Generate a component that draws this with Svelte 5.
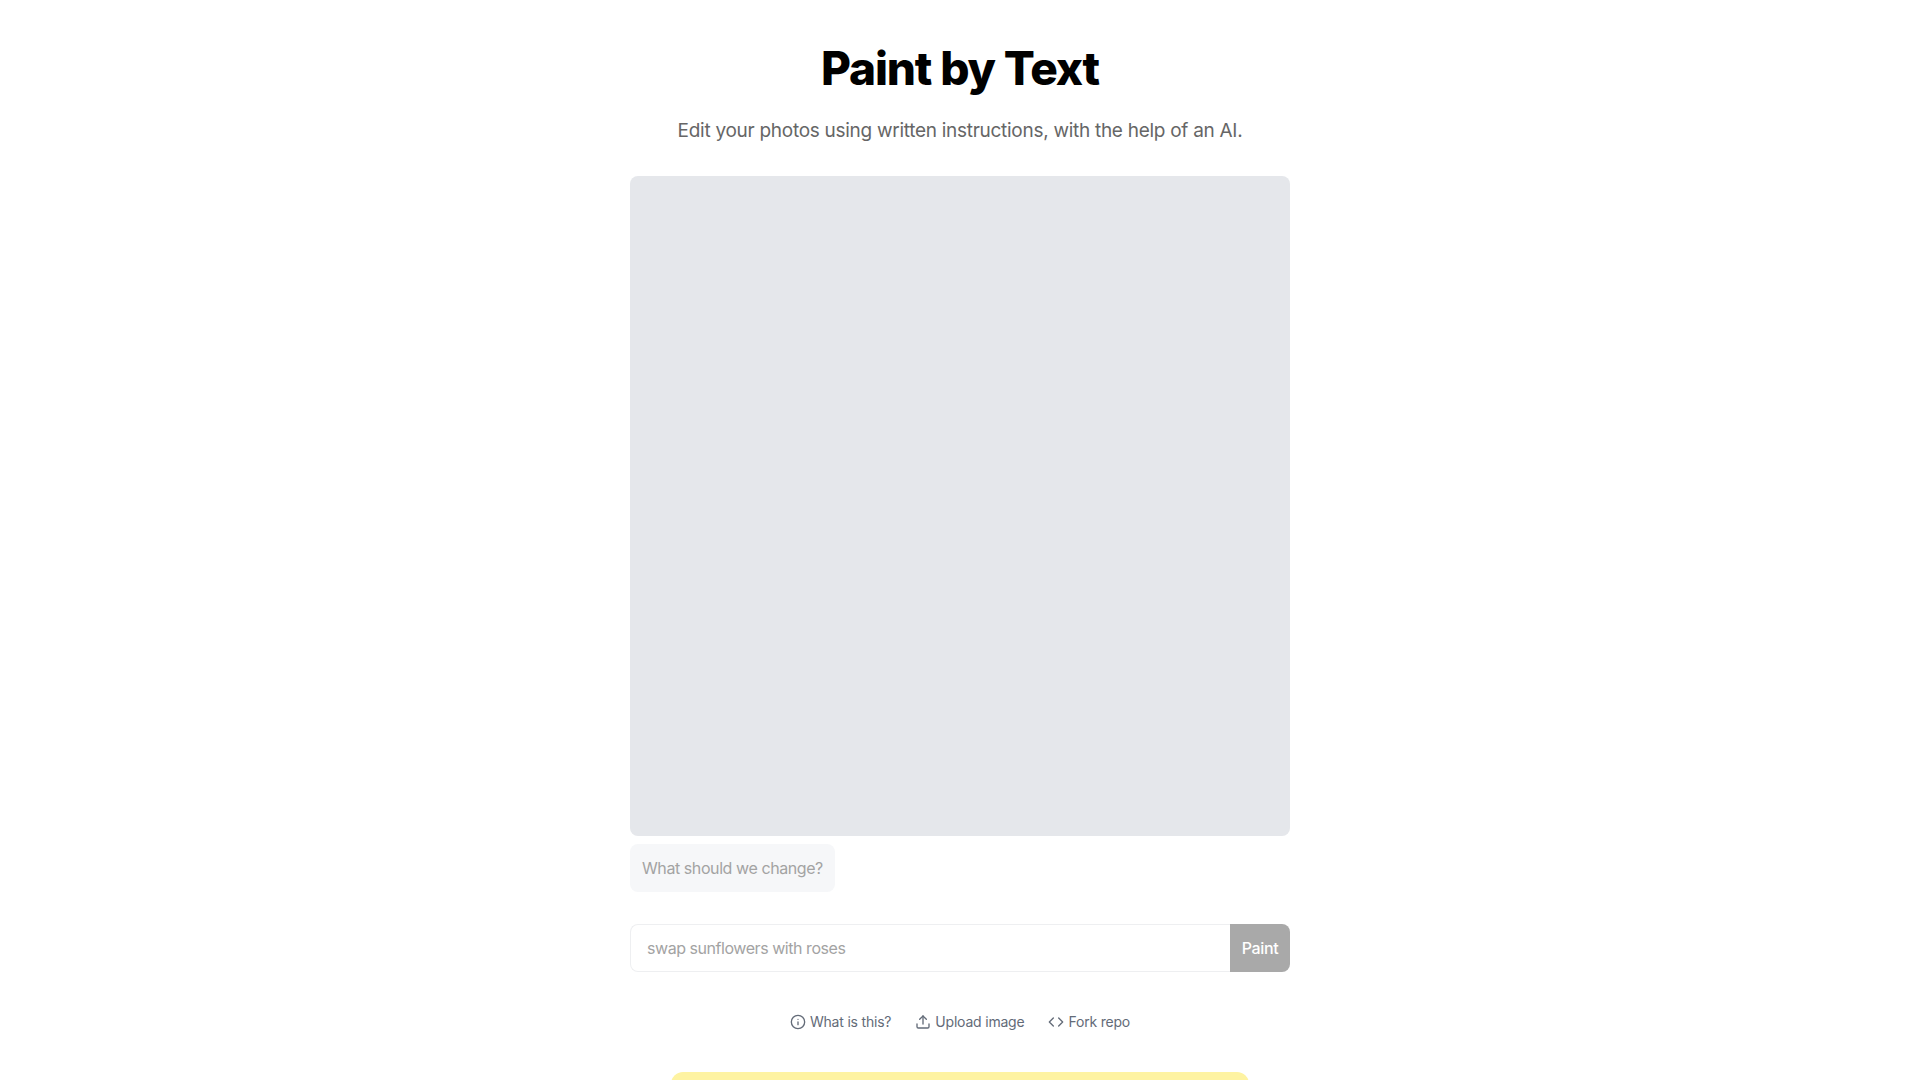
<script>
  const links = [
    { label: 'What is this?', icon: 'info' },
    { label: 'Upload image', icon: 'upload' },
    { label: 'Fork repo', icon: 'code' }
  ];
</script>

<main class="page">
  <h1>Paint by Text</h1>
  <p class="sub">Edit your photos using written instructions, with the help of an AI.</p>
  <div class="canvas"></div>
  <div class="bubble-row"><div class="bubble">What should we change?</div></div>
  <form class="prompt" onsubmit={(e) => e.preventDefault()}>
    <input type="text" placeholder="swap sunflowers with roses" />
    <button type="submit">Paint</button>
  </form>
  <nav class="links">
    {#each links as link}
      <a href="#top">
        <svg viewBox="0 0 24 24" fill="none" stroke="currentColor" stroke-width="2" stroke-linecap="round" stroke-linejoin="round">
          {#if link.icon === 'info'}
            <circle cx="12" cy="12" r="10" /><path d="M12 16v-4" /><path d="M12 8h.01" />
          {:else if link.icon === 'upload'}
            <path d="M21 15v4a2 2 0 0 1-2 2H5a2 2 0 0 1-2-2v-4" /><path d="M17 8l-5-5-5 5" /><path d="M12 3v12" />
          {:else}
            <path d="M16 18l6-6-6-6" /><path d="M8 6l-6 6 6 6" />
          {/if}
        </svg>
        <span>{link.label}</span>
      </a>
    {/each}
  </nav>
  <div class="notice"></div>
</main>

<style>
  :global(body) {
    margin: 0;
    background: #fff;
    overflow: hidden;
    font-family: Inter, "Liberation Sans", sans-serif;
  }
  .page {
    width: 660px;
    margin: 0 auto;
    height: 1080px;
    overflow: hidden;
    padding-top: 39px;
    box-sizing: border-box;
    display: flex;
    flex-direction: column;
  }
  h1 {
    margin: 0;
    font-size: 46px;
    line-height: 58px;
    font-weight: 800;
    text-align: center;
    color: #000;
    letter-spacing: -1.14px;
  }
  .sub {
    margin: 20px 0 0;
    font-size: 19px;
    line-height: 28px;
    letter-spacing: -0.28px;
    text-align: center;
    color: #666;
  }
  .canvas {
    margin-top: 31px;
    width: 660px;
    height: 660px;
    flex: none;
    background: #e5e7eb;
    border-radius: 8px;
  }
  .bubble-row { display: flex; margin-top: 8px; }
  .bubble {
    background: #f6f7f9;
    color: #a3a3a3;
    font-size: 16px;
    line-height: 24px;
    letter-spacing: -0.42px;
    padding: 12px;
    border-radius: 8px;
  }
  .prompt {
    display: flex;
    margin-top: 32px;
    height: 48px;
    flex: none;
  }
  input {
    flex: 1;
    min-width: 0;
    border: 1px solid #eeeff1;
    border-right: 0;
    border-radius: 8px 0 0 8px;
    padding: 0 16px;
    font: 16px/24px Inter, sans-serif;
    letter-spacing: -0.45px;
    color: #111;
    outline: none;
  }
  input::placeholder { color: #a3a3a3; opacity: 1; }
  button {
    width: 60px;
    border: 0;
    background: #a9a9a9;
    color: #fff;
    font: 500 16px/24px Inter, sans-serif;
    letter-spacing: -0.35px;
    border-radius: 0 8px 8px 0;
    padding: 0;
  }
  .links {
    display: flex;
    justify-content: center;
    gap: 24px;
    margin-top: 40px;
    line-height: 20px;
  }
  .links a {
    display: inline-flex;
    align-items: center;
    gap: 4px;
    font-size: 14px;
    letter-spacing: -0.2px;
    color: #636b78;
    text-decoration: none;
  }
  .links svg { width: 16px; height: 16px; flex: none; }
  .notice {
    width: 578px;
    height: 60px;
    flex: none;
    margin: 40px auto 0;
    background: #fef3a2;
    border-radius: 12px;
  }
</style>
